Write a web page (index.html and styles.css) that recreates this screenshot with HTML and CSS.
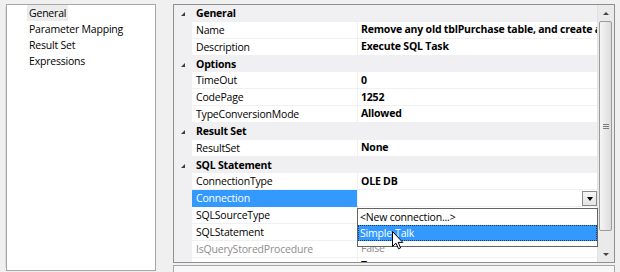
FILE: index.html
```html
<!DOCTYPE html>
<html>
<head>
<meta charset="utf-8">
<link rel="stylesheet" href="styles.css">
</head>
<body>
<div class="app">
  <div class="nav">
    <ul class="nav-list">
      <li class="nav-item selected">General</li>
      <li class="nav-item">Parameter Mapping</li>
      <li class="nav-item">Result Set</li>
      <li class="nav-item">Expressions</li>
    </ul>
  </div>
  <div class="main">
    <div class="grid">
      <div class="rows">
        <div class="row cat"><span class="margin"><span class="tri"></span></span><span class="cat-label">General</span></div>
        <div class="row prop"><span class="margin"></span><span class="name">Name</span><span class="val bold">Remove any old tblPurchase table, and create a new one</span></div>
        <div class="row prop"><span class="margin"></span><span class="name">Description</span><span class="val bold">Execute SQL Task</span></div>
        <div class="row cat"><span class="margin"><span class="tri"></span></span><span class="cat-label">Options</span></div>
        <div class="row prop"><span class="margin"></span><span class="name">TimeOut</span><span class="val bold">0</span></div>
        <div class="row prop"><span class="margin"></span><span class="name">CodePage</span><span class="val bold">1252</span></div>
        <div class="row prop"><span class="margin"></span><span class="name">TypeConversionMode</span><span class="val bold">Allowed</span></div>
        <div class="row cat"><span class="margin"><span class="tri"></span></span><span class="cat-label">Result Set</span></div>
        <div class="row prop"><span class="margin"></span><span class="name">ResultSet</span><span class="val bold">None</span></div>
        <div class="row cat"><span class="margin"><span class="tri"></span></span><span class="cat-label">SQL Statement</span></div>
        <div class="row prop"><span class="margin"></span><span class="name">ConnectionType</span><span class="val bold">OLE DB</span></div>
        <div class="row prop active"><span class="margin"></span><span class="name">Connection</span><span class="val"><span class="dd-btn"><span class="dd-arrow"></span></span></span></div>
        <div class="row prop"><span class="margin"></span><span class="name">SQLSourceType</span><span class="val"></span></div>
        <div class="row prop"><span class="margin"></span><span class="name">SQLStatement</span><span class="val"></span></div>
        <div class="row prop disabled"><span class="margin"></span><span class="name">IsQueryStoredProcedure</span><span class="val">False</span></div>
        <div class="row prop"><span class="margin"></span><span class="name">BypassPrepare</span><span class="val bold">True</span></div>
      </div>
      <div class="scroll">
        <div class="sb-btn"><span class="sb-up"></span></div>
        <div class="thumb"><span class="grip"></span></div>
        <div class="sb-space"></div>
        <div class="sb-btn"><span class="sb-down"></span></div>
      </div>
      <div class="dropdown">
        <div class="dd-item">&lt;New connection...&gt;</div>
        <div class="dd-item dd-sel">Simple-Talk</div>
      </div>
      <svg class="cursor" width="12" height="19" viewBox="0 0 12 19">
        <path d="M0.5 0.5 L0.5 15.5 L4 12.2 L6.5 17.8 L8.6 16.9 L6.2 11.4 L10.8 11.4 Z" fill="#fff" stroke="#000" stroke-width="1" stroke-linejoin="miter"/>
      </svg>
    </div>
    <div class="desc"></div>
  </div>
</div>
</body>
</html>
```
FILE: styles.css
```css
* { box-sizing: border-box; }
html, body { margin: 0; padding: 0; }
body {
  background: #f0f0f0;
  font-family: "Open Sans", "Noto Sans", sans-serif;
  font-size: 10.5px;
  letter-spacing: -0.2px;
  color: #000;
  overflow: hidden;
  width: 620px;
  height: 272px;
}
.app {
  display: flex;
  gap: 17px;
  padding: 4px 5px 0 6px;
  height: 272px;
}
.nav {
  width: 150px;
  height: 267px;
  background: #fff;
  border: 1px solid #a7a7a7;
  box-shadow: -4px 0 0 -3px #dcdcdc;
  padding: 0 0 0 20px;
}
.nav-list {
  list-style: none;
  margin: 0;
  padding: 0;
}
.nav-item {
  height: 16px;
  line-height: 17px;
  padding: 0 2px;
  width: max-content;
}
.nav-item.selected { background: #ececec; }
.main {
  flex: 1;
  display: flex;
  flex-direction: column;
}
.grid {
  position: relative;
  height: 259px;
  border: 1px solid #8e8f8f;
  background: #fff;
  display: flex;
  overflow: hidden;
}
.rows {
  width: 423px;
  display: flex;
  flex-direction: column;
  background: #f0f0f2;
}
.row {
  display: grid;
  grid-template-columns: 18px 166px 239px;
  height: 16.85px;
  flex: none;
  line-height: 17px;
  white-space: nowrap;
}
.margin {
  background: #f0f0f2;
  display: flex;
  align-items: center;
  justify-content: flex-start;
  padding-left: 7px;
}
.tri {
  width: 0;
  height: 0;
  border-left: 4px solid transparent;
  border-bottom: 4px solid #3c3c3c;
  margin-top: 1px;
}
.cat-label {
  grid-column: 2 / 4;
  font-weight: bold;
  padding-left: 4px;
}
.prop .name {
  background: #fff;
  padding-left: 4px;
  border-bottom: 1px solid #f0f0f2;
  border-right: 1px solid #f0f0f2;
  overflow: hidden;
}
.prop .val {
  background: #fff;
  padding-left: 3px;
  border-bottom: 1px solid #f0f0f2;
  overflow: hidden;
  display: flex;
  align-items: center;
}
.bold { font-weight: bold; }
.active .name { background: #3399ff; color: #fff; border-bottom-color: #3399ff; }
.active .val { justify-content: flex-end; padding-right: 0; }
.disabled .name, .disabled .val { color: #8d8d8d; }
.dd-btn {
  width: 15px;
  height: 15px;
  border: 1px solid #8a8a8a;
  background: linear-gradient(#f6f6f6, #e4e4e4);
  display: flex;
  align-items: center;
  justify-content: center;
}
.dd-arrow {
  width: 0;
  height: 0;
  border-left: 3.5px solid transparent;
  border-right: 3.5px solid transparent;
  border-top: 4px solid #000;
  margin-top: 1px;
}
.scroll {
  width: 17px;
  display: flex;
  flex-direction: column;
  background: #eaeaea;
  border-left: 1px solid #e2e2e2;
}
.sb-btn {
  height: 16px;
  display: flex;
  align-items: center;
  justify-content: center;
  flex: none;
}
.sb-up, .sb-down {
  width: 0;
  height: 0;
  border-left: 3px solid transparent;
  border-right: 3px solid transparent;
}
.sb-up { border-bottom: 3px solid #454545; }
.sb-down { border-top: 3px solid #454545; }
.thumb {
  height: 210px;
  margin: 0 2px 0 1px;
  border: 1px solid #9b9b9b;
  border-radius: 2px;
  background: linear-gradient(to right, #f5f5f5, #dcdcdc);
  display: flex;
  align-items: center;
  justify-content: center;
  flex: none;
}
.grip {
  width: 6px;
  height: 5px;
  border-top: 1px solid #7d7d7d;
  border-bottom: 1px solid #7d7d7d;
  position: relative;
}
.grip::after {
  content: "";
  position: absolute;
  left: 0;
  right: 0;
  top: 1px;
  border-top: 1px solid #7d7d7d;
}
.sb-space { flex: 1; }
.dropdown {
  position: absolute;
  left: 183px;
  top: 203px;
  width: 241px;
  height: 39px;
  background: #fff;
  border: 1px solid #646464;
}
.dd-item {
  height: 16px;
  line-height: 16px;
  padding-left: 2px;
}
.dd-sel {
  background: #3399ff;
  color: #fff;
  outline: 1px dotted #1a3a6a;
  outline-offset: -1px;
}
.cursor {
  position: absolute;
  left: 218px;
  top: 226px;
}
.desc {
  margin-top: 2px;
  flex: 1;
  border: 1px solid #a7a7a7;
  border-bottom: none;
  background: #f7f7f7;
}
```
